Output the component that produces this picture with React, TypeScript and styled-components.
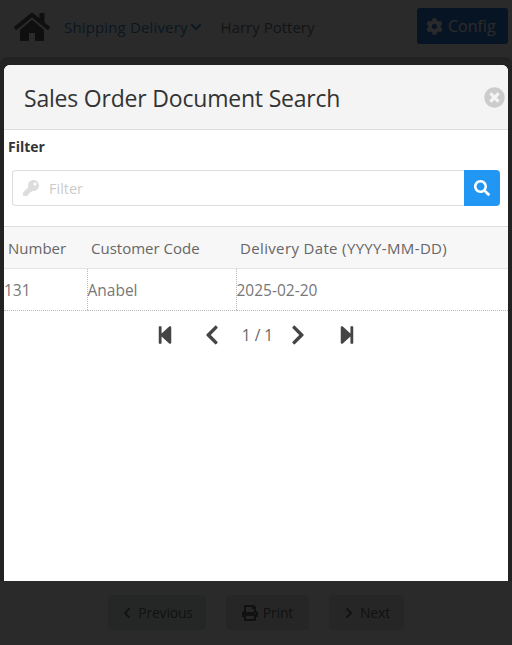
import React from 'react';
import styled, { createGlobalStyle } from 'styled-components';
import {
  FaChevronDown,
  FaChevronLeft,
  FaChevronRight,
  FaCog,
  FaHome,
  FaKey,
  FaPrint,
  FaSearch,
  FaStepBackward,
  FaStepForward,
  FaTimesCircle,
} from 'react-icons/fa';

const GlobalStyle = createGlobalStyle`
  html, body {
    margin: 0;
    padding: 0;
    background: #fff;
  }
  body {
    font-family: "Open Sans", "Noto Sans", sans-serif;
    color: #333;
  }
`;

const Page = styled.div`
  position: relative;
  width: 512px;
  height: 645px;
  overflow: hidden;
  display: flex;
  flex-direction: column;
`;

// Page behind the dialog
const Header = styled.header`
  display: flex;
  align-items: center;
  height: 36px;
  padding: 8px 4px 0 14px;
`;

const HomeLink = styled.span`
  display: flex;
  width: 36px;
  margin: 2px 14px 0 0;
  font-size: 36px;
  color: #5a5a5a;
`;

const NavLink = styled.span`
  display: flex;
  align-items: center;
  gap: 2px;
  font-size: 15px;
  letter-spacing: 0.15px;
  color: #3f8cc8;
  margin: 2px 19px 0 0;
  svg {
    font-size: 12px;
  }
`;

const UserName = styled.span`
  flex: 1;
  margin-top: 2px;
  font-size: 15px;
  color: #777;
`;

const ConfigButton = styled.button`
  display: flex;
  align-items: center;
  gap: 5px;
  width: 91px;
  height: 36px;
  padding: 0 0 0 9px;
  border: none;
  border-radius: 3px;
  background: #2f7dd1;
  color: #fff;
  font: inherit;
  font-size: 16px;
  svg {
    font-size: 17px;
  }
`;

const Panel = styled.main`
  flex: 1;
  margin-top: 13px;
  background: #d0d0d0;
  border-radius: 6px 6px 0 0;
`;

const Footer = styled.footer`
  display: flex;
  justify-content: center;
  gap: 20px;
  padding: 14px 0 15px;
`;

const FooterButton = styled.button<{ $tint: string; $width: number }>`
  display: flex;
  align-items: center;
  justify-content: center;
  gap: 5px;
  width: ${(p) => p.$width}px;
  height: 35px;
  padding: 0;
  border: none;
  border-radius: 4px;
  background: ${(p) => p.$tint};
  color: #666;
  font: inherit;
  font-size: 14px;
  letter-spacing: -0.2px;
`;

const Backdrop = styled.div`
  position: absolute;
  inset: 0;
  background: rgba(0, 0, 0, 0.835);
`;

// Dialog
const Modal = styled.div`
  position: absolute;
  top: 65px;
  left: 4px;
  width: 504px;
  height: 516px;
  background: #fff;
  border-radius: 6px 6px 0 0;
  overflow: hidden;
`;

const ModalHeader = styled.div`
  display: flex;
  align-items: center;
  justify-content: space-between;
  box-sizing: border-box;
  height: 65px;
  padding: 0 3px 0 20px;
  background: #f4f4f4;
  border-bottom: 1px solid #ddd;
`;

const ModalTitle = styled.h4`
  margin: 2px 0 0;
  font-size: 23px;
  font-weight: 400;
  letter-spacing: -0.2px;
  color: #333;
`;

const CloseButton = styled.span`
  display: flex;
  font-size: 21px;
  color: #ccc;
`;

const FilterLabel = styled.label`
  display: block;
  padding: 7px 0 0 4px;
  font-size: 14px;
  font-weight: 700;
  line-height: 20px;
  color: #333;
`;

const InputGroup = styled.div`
  display: flex;
  height: 36px;
  margin: 13px 8px 20px;
`;

const InputBox = styled.div`
  flex: 1;
  display: flex;
  align-items: center;
  gap: 10px;
  padding-left: 10px;
  border: 1px solid #ddd;
  border-right: none;
  border-radius: 4px 0 0 4px;
  color: #ddd;
  font-size: 16px;
`;

const FilterInput = styled.input`
  flex: 1;
  min-width: 0;
  border: none;
  outline: none;
  padding: 0;
  background: transparent;
  font: inherit;
  font-size: 14.5px;
  &::placeholder {
    color: #ccc;
    opacity: 1;
  }
`;

const SearchButton = styled.button`
  display: flex;
  align-items: center;
  justify-content: center;
  width: 36px;
  padding: 0;
  border: none;
  border-radius: 0 4px 4px 0;
  background: #2196f3;
  color: #fff;
  font-size: 16px;
`;

const Table = styled.table`
  width: 100%;
  border-collapse: collapse;
  table-layout: fixed;
  font-size: 15px;
`;

const HeadCell = styled.th<{ $width?: number; $spacing?: number }>`
  width: ${(p) => (p.$width ? `${p.$width}px` : 'auto')};
  height: 41px;
  padding: 0 0 0 4px;
  background: #f7f7f7;
  border-top: 1px solid #ddd;
  border-bottom: 1px solid #e4e4e4;
  font-weight: 400;
  letter-spacing: ${(p) => p.$spacing ?? 0}px;
  text-align: left;
  white-space: nowrap;
  color: #666;
`;

const Cell = styled.td`
  height: 41px;
  padding: 0;
  border-bottom: 1px dotted #bbb;
  border-left: 1px dotted #bbb;
  font-size: 15.5px;
  color: #777;
  &:first-child {
    border-left: none;
  }
`;

const Pager = styled.div`
  display: flex;
  align-items: center;
  justify-content: center;
  height: 48px;
  color: #444;
  font-size: 15.5px;
`;

const PagerIcon = styled.span<{ $gap: number; $size: number }>`
  display: flex;
  font-size: ${(p) => p.$size}px;
  margin-right: ${(p) => p.$gap}px;
`;

const PagerText = styled.span`
  margin-right: 14px;
  color: #666;
`;

export default function App() {
  return (
    <Page>
      <GlobalStyle />
      <Header>
        <HomeLink>
          <FaHome />
        </HomeLink>
        <NavLink>
          Shipping Delivery
          <FaChevronDown />
        </NavLink>
        <UserName>Harry Pottery</UserName>
        <ConfigButton>
          <FaCog />
          Config
        </ConfigButton>
      </Header>
      <Panel />
      <Footer>
        <FooterButton $tint="#dfeeee" $width={98}>
          <FaChevronLeft size={12} />
          Previous
        </FooterButton>
        <FooterButton $tint="#e6e6e6" $width={83}>
          <FaPrint size={16} />
          Print
        </FooterButton>
        <FooterButton $tint="#e6e6e6" $width={75}>
          <FaChevronRight size={12} />
          Next
        </FooterButton>
      </Footer>
      <Backdrop />
      <Modal>
        <ModalHeader>
          <ModalTitle>Sales Order Document Search</ModalTitle>
          <CloseButton>
            <FaTimesCircle />
          </CloseButton>
        </ModalHeader>
        <FilterLabel>Filter</FilterLabel>
        <InputGroup>
          <InputBox>
            <FaKey />
            <FilterInput placeholder="Filter" />
          </InputBox>
          <SearchButton>
            <FaSearch />
          </SearchButton>
        </InputGroup>
        <Table>
          <thead>
            <tr>
              <HeadCell $width={79}>Number</HeadCell>
              <HeadCell $width={145}>Customer Code</HeadCell>
              <HeadCell $spacing={0.35}>Delivery Date (YYYY-MM-DD)</HeadCell>
            </tr>
          </thead>
          <tbody>
            <tr>
              <Cell>131</Cell>
              <Cell>Anabel</Cell>
              <Cell>2025-02-20</Cell>
            </tr>
          </tbody>
        </Table>
        <Pager>
          <PagerIcon $gap={26} $size={20}>
            <FaStepBackward />
          </PagerIcon>
          <PagerIcon $gap={19} $size={22}>
            <FaChevronLeft />
          </PagerIcon>
          <PagerText>1 / 1</PagerText>
          <PagerIcon $gap={28} $size={22}>
            <FaChevronRight />
          </PagerIcon>
          <PagerIcon $gap={0} $size={20}>
            <FaStepForward />
          </PagerIcon>
        </Pager>
      </Modal>
    </Page>
  );
}
